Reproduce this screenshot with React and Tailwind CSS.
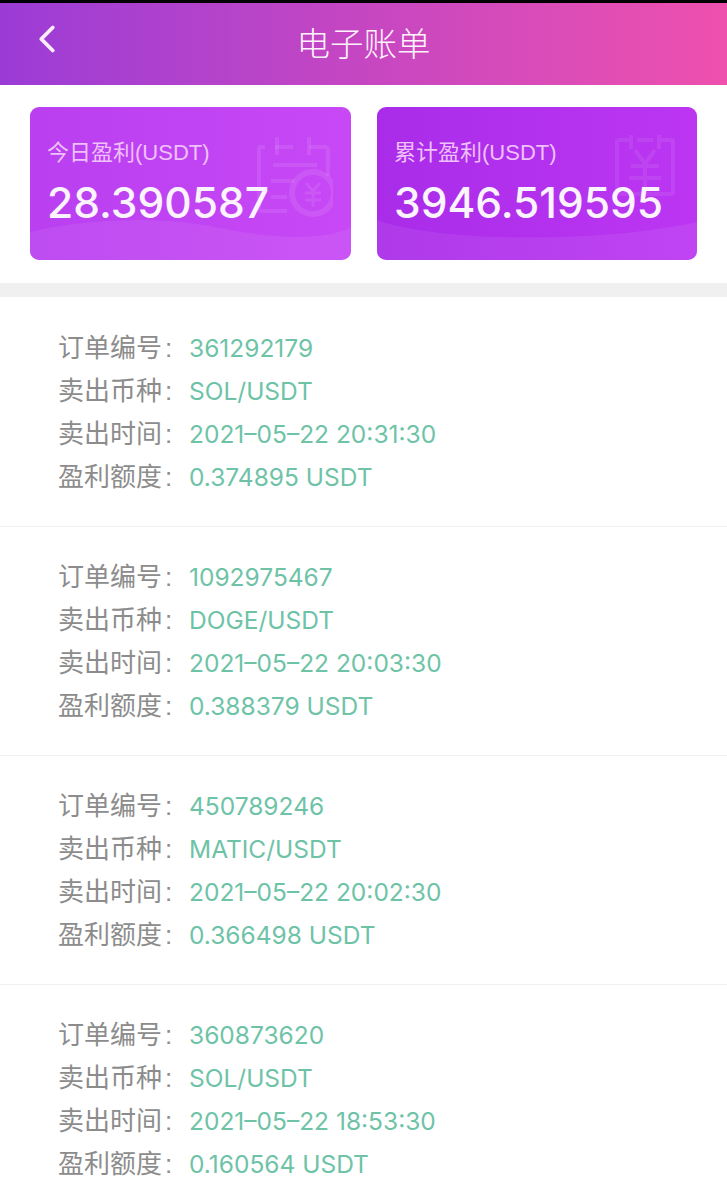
import { ChevronLeft } from "lucide-react";

const sans = "font-['Liberation_Sans','Noto_Sans_CJK_SC',sans-serif]";

const orders = [
  { id: "361292179", pair: "SOL/USDT", time: "2021–05–22 20:31:30", profit: "0.374895 USDT" },
  { id: "1092975467", pair: "DOGE/USDT", time: "2021–05–22 20:03:30", profit: "0.388379 USDT" },
  { id: "450789246", pair: "MATIC/USDT", time: "2021–05–22 20:02:30", profit: "0.366498 USDT" },
  { id: "360873620", pair: "SOL/USDT", time: "2021–05–22 18:53:30", profit: "0.160564 USDT" },
];

function BillIcon() {
  return (
    <svg viewBox="0 0 76 84" className="absolute left-[227px] top-[28px] h-[84px] w-[76px]" fill="none" stroke="#fff" strokeOpacity="0.09" strokeWidth="4">
      <path d="M36 12H18M52 12h16a3 3 0 0 1 3 3v26M8 12H4a2 2 0 0 0-2 2v60a2 2 0 0 0 2 2h26" />
      <path d="M20 2v18M52 2v18M16 30h44M14 46h24M14 62h16" />
      <circle cx="56" cy="58" r="21" strokeWidth="6" />
      <path d="M49 48l7 8 7-8M48 58h16M48 65h16M56 56v16" strokeWidth="3" />
    </svg>
  );
}

function YuanIcon() {
  return (
    <svg viewBox="0 0 60 62" className="absolute left-[238px] top-[27px] h-[62px] w-[60px]" fill="none" stroke="#fff" strokeOpacity="0.08" strokeWidth="4">
      <path d="M14 6H4a2 2 0 0 0-2 2v50a2 2 0 0 0 2 2h52a2 2 0 0 0 2-2V8a2 2 0 0 0-2-2H46M22 6h16" />
      <path d="M16 1v14M44 1v14M20 16l10 14 10-14M16 32h28M14 44h32M30 30v30" />
    </svg>
  );
}

function StatCard({ label, value, className, icon, wave }) {
  return (
    <div className={`relative h-[153px] overflow-hidden rounded-[9px] pl-[17px] ${className}`}>
      {icon}
      <svg viewBox="0 0 321 50" preserveAspectRatio="none" className="absolute bottom-0 left-0 h-[50px] w-full">
        <path d={wave} fill="#fff" fillOpacity="0.07" />
      </svg>
      <div className="relative pt-[31px] text-[22px] leading-[30px] text-[#efc0fa]">{label}</div>
      <div className="relative mt-[7px] font-['Inter',sans-serif] text-[42.5px] leading-[56px] font-medium text-[#fbf4fe]">{value}</div>
    </div>
  );
}

function OrderRow({ label, value }) {
  return (
    <div className="flex h-[43px] items-center">
      <span className="w-[131px] shrink-0 text-[26px] text-[#8c8c8c]">
        {label}
        <span className="ml-[3px]">:</span>
      </span>
      <span className="font-['Inter',sans-serif] text-[24.5px] text-[#6ec3a7]">{value}</span>
    </div>
  );
}

export default function App() {
  return (
    <div className={`h-[1200px] w-[727px] overflow-hidden bg-white ${sans}`}>
      <div className="h-[3px] bg-black" />
      <header className="relative flex h-[82px] items-center justify-center bg-gradient-to-r from-[#9b3bd6] via-[#c646c2] to-[#ee50ad]">
        <ChevronLeft className="absolute top-[13px] left-[24px] text-[#fbeefa]" size={46} strokeWidth={2} />
        <h1 className="pt-[3px] text-[33.5px] font-light text-[#fdf3fb]">电子账单</h1>
      </header>

      <div className="flex h-[198px] justify-between px-[30px] pt-[22px]">
        <StatCard
          label="今日盈利(USDT)"
          value="28.390587"
          className="w-[321px] bg-gradient-to-r from-[#b93ff0] to-[#c848f6]"
          icon={<BillIcon />}
          wave="M0 22C60 8 130 6 190 18S290 30 321 18V50H0Z"
        />
        <StatCard
          label="累计盈利(USDT)"
          value="3946.519595"
          className="w-[320px] bg-gradient-to-r from-[#a92ce9] to-[#bc36f2]"
          icon={<YuanIcon />}
          wave="M0 10C60 32 220 34 321 12V50H0Z"
        />
      </div>

      <div className="h-[14px] bg-[#f0f0f0]" />

      <div className="pt-px">
        {orders.map((o) => (
          <section key={o.id} className="h-[229px] border-b border-[#f2f2f2] pt-[29px] pl-[58px]">
            <OrderRow label="订单编号" value={o.id} />
            <OrderRow label="卖出币种" value={o.pair} />
            <OrderRow label="卖出时间" value={o.time} />
            <OrderRow label="盈利额度" value={o.profit} />
          </section>
        ))}
      </div>
    </div>
  );
}
